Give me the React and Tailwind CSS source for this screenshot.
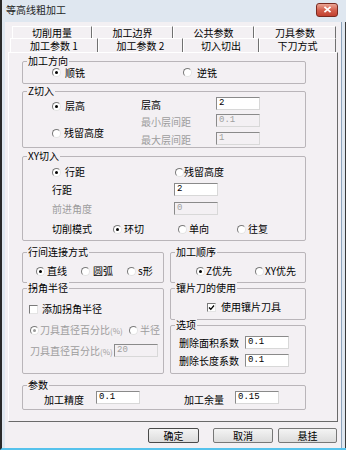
import React from "react";

function Radio({ label, checked = false, disabled = false, gap = "gap-[3px]", className = "" }) {
    return (
        <div className={`flex items-center h-[12px] whitespace-nowrap ${gap} ${className}`}>
            <span className="w-[9px] h-[9px] shrink-0 rounded-full border border-t-[#7a7a7a] border-l-[#7a7a7a] border-r-[#e4e4e4] border-b-[#e4e4e4] bg-white flex items-center justify-center">
                {checked && (
                    <span className={`w-[3px] h-[3px] rounded-full ${disabled ? "bg-[#9a9a9a]" : "bg-black"}`} />
                )}
            </span>
            <span className={disabled ? "text-[#9d9d9d]" : "text-black"}>{label}</span>
        </div>
    );
}

function Check({ label, checked = false, gap = "gap-[4px]" }) {
    return (
        <div className={`flex items-center h-[12px] whitespace-nowrap ${gap}`}>
            <span className="relative w-[9px] h-[9px] shrink-0 border border-t-[#7a7a7a] border-l-[#7a7a7a] border-r-[#e4e4e4] border-b-[#e4e4e4] bg-white">
                {checked && (
                    <svg viewBox="0 0 7 7" className="absolute left-0 top-0 w-[7px] h-[7px]">
                        <path d="M1 3.5 L2.8 5.3 L6 1.5" fill="none" stroke="#000" strokeWidth="1.3" />
                    </svg>
                )}
            </span>
            <span>{label}</span>
        </div>
    );
}

function Field({ value, disabled = false }) {
    return (
        <div
            className={`w-[44px] h-[13px] shrink-0 border border-t-[#8a8a8a] border-l-[#8a8a8a] border-r-[#d8d8d8] border-b-[#d8d8d8] pl-[2px] font-['Liberation_Mono',monospace] text-[9px] leading-[11px] ${
                disabled ? "bg-[#f3f0f3] text-[#a0a0a0]" : "bg-white text-black"
            }`}
        >
            {value}
        </div>
    );
}

function Group({ title, className = "", children }) {
    return (
        <div className={`relative shrink-0 border border-[#b9b5b9] rounded-[2px] ${className}`}>
            <span className="absolute -top-[7px] left-[4px] px-[1px] bg-[#f3f0f3] leading-[12px] whitespace-nowrap">
                {title}
            </span>
            {children}
        </div>
    );
}

function Tab({ label, width, selected = false }) {
    return (
        <div
            className={`${width} h-full flex items-center justify-center border-l border-t border-l-white border-t-white border-r border-r-[#707070] whitespace-nowrap leading-[10px] ${
                selected ? "bg-[#f3f0f3]" : ""
            }`}
        >
            {label}
        </div>
    );
}

function Button({ label, width, primary = false }) {
    return (
        <div
            className={`${width} h-[15px] flex items-center justify-center rounded-[2px] border bg-gradient-to-b from-[#f4f4f4] to-[#dcdcdc] leading-[11px] ${
                primary ? "border-[#4a4a4a]" : "border-[#777777]"
            }`}
        >
            {label}
        </div>
    );
}

export default function App() {
    return (
        <div className="w-[346px] h-[450px] flex flex-col overflow-hidden bg-[#dfe7f0] border-l-2 border-l-[#2a2a2a] border-b-2 border-b-[#55c2ec] font-['Noto_Sans_CJK_SC','Noto_Sans',sans-serif] text-[10px] leading-[12px] text-black">
            {/* title bar */}
            <div className="h-[22px] shrink-0 flex items-center pl-[4px] pr-[8px]">
                <span className="pb-[3px] text-[#1e1e1e]">等高线粗加工</span>
                <div className="ml-auto mb-[3px] w-[22px] h-[14px] rounded-[3px] border border-[#7a2a20] bg-gradient-to-b from-[#eaa595] via-[#d3604e] to-[#c2402f] flex items-center justify-center">
                    <svg viewBox="0 0 10 8" className="w-[9px] h-[7px]">
                        <path d="M1.5 1 L8.5 7 M8.5 1 L1.5 7" stroke="#fff" strokeWidth="2" />
                    </svg>
                </div>
            </div>

            <div className="flex flex-1">
                {/* left frame */}
                <div className="w-[3px] shrink-0" />

                {/* client area */}
                <div className="w-[336px] shrink-0 bg-[#f3f0f3] flex flex-col pl-[3px] pt-[4px]">
                    {/* tab rows */}
                    <div className="flex h-[12px] ml-[4px]">
                        <Tab label="切削用量" width="w-[80px]" />
                        <Tab label="加工边界" width="w-[81px]" />
                        <Tab label="公共参数" width="w-[81px]" />
                        <Tab label="刀具参数" width="w-[82px]" />
                    </div>
                    <div className="flex h-[14px] ml-[2px]">
                        <Tab label="加工参数 1" width="w-[88px]" selected />
                        <Tab label="加工参数 2" width="w-[85px]" />
                        <Tab label="切入切出" width="w-[76px]" />
                        <Tab label="下刀方式" width="w-[77px]" />
                    </div>

                    {/* tab panel */}
                    <div className="w-[330px] h-[370px] shrink-0 border border-l-white border-t-white border-r-[#6a6a6a] border-b-[#6a6a6a] flex flex-col pl-[13px]">
                        <Group title="加工方向" className="mt-[8px] w-[284px] h-[23px] flex items-center pl-[29px]">
                            <Radio label="顺铣" checked gap="gap-[4px]" className="w-[131px]" />
                            <Radio label="逆铣" gap="gap-[5px]" />
                        </Group>

                        <Group title="Z切入" className="mt-[7px] w-[284px] h-[57px] flex">
                            <div className="w-[118px] pl-[29px] pt-[8px] flex flex-col">
                                <Radio label="层高" checked gap="gap-[4px]" />
                                <Radio label="残留高度" className="mt-[15px]" />
                            </div>
                            <div className="flex flex-col pt-[5px]">
                                <div className="flex items-center h-[13px]">
                                    <span className="w-[75px] pt-[3px]">层高</span>
                                    <Field value="2" />
                                </div>
                                <div className="flex items-center h-[13px] mt-[4px]">
                                    <span className="w-[75px] pt-[2px] text-[#9d9d9d]">最小层间距</span>
                                    <Field value="0.1" disabled />
                                </div>
                                <div className="flex items-center h-[13px] mt-[5px]">
                                    <span className="w-[75px] pt-[2px] text-[#9d9d9d]">最大层间距</span>
                                    <Field value="1" disabled />
                                </div>
                            </div>
                        </Group>

                        <Group title="XY切入" className="mt-[8px] w-[284px] h-[85px] flex flex-col pl-[29px]">
                            <div className="flex items-center mt-[9px]">
                                <Radio label="行距" checked gap="gap-[4px]" className="w-[123px]" />
                                <Radio label="残留高度" gap="gap-0" />
                            </div>
                            <div className="flex items-center h-[13px] mt-[5px]">
                                <span className="w-[122px]">行距</span>
                                <Field value="2" />
                            </div>
                            <div className="flex items-center h-[13px] mt-[6px]">
                                <span className="w-[122px] text-[#9d9d9d]">前进角度</span>
                                <Field value="0" disabled />
                            </div>
                            <div className="flex items-center h-[12px] mt-[8px]">
                                <span className="w-[61px]">切削模式</span>
                                <Radio label="环切" checked gap="gap-[2px]" className="w-[65px]" />
                                <Radio label="单向" gap="gap-[2px]" className="w-[59px]" />
                                <Radio label="往复" gap="gap-[2px]" />
                            </div>
                        </Group>

                        <div className="flex gap-[6px] mt-[11px]">
                            <Group title="行间连接方式" className="w-[142px] h-[31px] flex pl-[13px] pt-[12px]">
                                <Radio label="直线" checked gap="gap-[2px]" className="w-[45px]" />
                                <Radio label="圆弧" gap="gap-[3px]" className="w-[46px]" />
                                <Radio label="s形" gap="gap-[2px]" />
                            </Group>
                            <Group title="加工顺序" className="w-[136px] h-[31px] flex pl-[25px] pt-[12px]">
                                <Radio label="Z优先" checked gap="gap-[1px]" className="w-[59px]" />
                                <Radio label="XY优先" gap="gap-[1px]" />
                            </Group>
                        </div>

                        <div className="flex gap-[6px] mt-[5px]">
                            <Group title="拐角半径" className="w-[142px] h-[86px] flex flex-col pl-[6px] pt-[14px]">
                                <Check label="添加拐角半径" gap="gap-[4px]" />
                                <div className="flex items-center mt-[9px] pl-[1px]">
                                    <Radio
                                        label={<>刀具直径百分比<span className="text-[8px]">(%)</span></>}
                                        checked
                                        disabled
                                        gap="gap-[1px]"
                                        className="w-[99px]"
                                    />
                                    <Radio label="半径" disabled gap="gap-[2px]" />
                                </div>
                                <div className="flex items-center h-[13px] mt-[8px] pl-[1px]">
                                    <span className="w-[84px] text-[#9d9d9d] whitespace-nowrap pt-[2px]">
                                        刀具直径百分比<span className="text-[8px]">(%)</span>
                                    </span>
                                    <Field value="20" disabled />
                                </div>
                            </Group>
                            <div className="flex flex-col">
                                <Group title="镶片刀的使用" className="w-[136px] h-[32px] pl-[36px] pt-[12px]">
                                    <Check label="使用镶片刀具" checked gap="gap-[5px]" />
                                </Group>
                                <Group title="选项" className="w-[136px] h-[49px] mt-[5px] flex flex-col pl-[8px] pt-[10px]">
                                    <div className="flex items-center h-[13px]">
                                        <span className="w-[66px]">删除面积系数</span>
                                        <Field value="0.1" />
                                    </div>
                                    <div className="flex items-center h-[13px] mt-[5px]">
                                        <span className="w-[66px]">删除长度系数</span>
                                        <Field value="0.1" />
                                    </div>
                                </Group>
                            </div>
                        </div>

                        <Group title="参数" className="mt-[11px] w-[284px] h-[25px] flex items-start pl-[21px] pt-[5px]">
                            <div className="flex items-center h-[13px]">
                                <span className="w-[52px] pt-[4px]">加工精度</span>
                                <Field value="0.1" />
                            </div>
                            <div className="flex items-center h-[13px] ml-[44px]">
                                <span className="w-[51px] pt-[4px]">加工余量</span>
                                <Field value="0.15" />
                            </div>
                        </Group>
                    </div>

                    {/* buttons */}
                    <div className="flex justify-end items-center mt-[6px] pr-[4px]">
                        <Button label="确定" width="w-[51px]" primary />
                        <div className="w-[14px]" />
                        <Button label="取消" width="w-[60px]" />
                        <div className="w-[5px]" />
                        <Button label="悬挂" width="w-[59px]" />
                    </div>
                </div>

                {/* right frame */}
                <div className="w-[1px] shrink-0 bg-[#8ea4bc]" />
                <div className="flex-1" />
                <div className="w-[1px] shrink-0 bg-[#3a3a3a]" />
            </div>
        </div>
    );
}
